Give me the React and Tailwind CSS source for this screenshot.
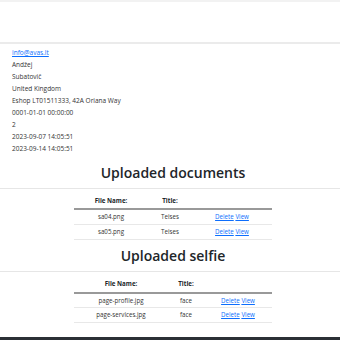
export default function App() {
  const font = { fontFamily: '"Open Sans", "Noto Sans", sans-serif' };
  const info = [
    "Andžej",
    "Subatovič",
    "United Kingdom",
    "Eshop LT01511333, 42A Oriana Way",
    "0001-01-01 00:00:00",
    "2",
    "2023-09-07 14:05:51",
    "2023-09-14 14:05:51",
  ];
  const Table = ({ rows, cols }) => (
    <div className="flex justify-center pl-[6px]">
      <table className="w-[198px] table-fixed text-[6.2px] text-[#333] text-center border-collapse">
        <colgroup>
          <col style={{ width: cols[0] }} />
          <col style={{ width: cols[1] }} />
          <col style={{ width: cols[2] }} />
        </colgroup>
        <thead>
          <tr className="border-b-2 border-[#999]">
            <th className="h-[16px] p-0 font-bold text-[#212529]">File Name:</th>
            <th className="h-[16px] p-0 font-bold text-[#212529]">Title:</th>
            <th className="h-[16px] p-0"></th>
          </tr>
        </thead>
        <tbody>
          {rows.map((r) => (
            <tr key={r[0]} className="border-b border-[#e8e8e8]">
              <td className="h-[15px] p-0">{r[0]}</td>
              <td className="h-[15px] p-0">{r[1]}</td>
              <td className="h-[15px] p-0">
                <a className="text-[#0d6efd] underline" href="#">Delete</a>{" "}
                <a className="text-[#0d6efd] underline" href="#">View</a>
              </td>
            </tr>
          ))}
        </tbody>
      </table>
    </div>
  );
  return (
    <div className="w-[340px] h-[340px] overflow-hidden bg-white flex flex-col" style={font}>
      <div className="h-[2px] bg-[#f2f2f2]" />
      <div className="h-[40px] bg-white" />
      <div className="h-[2px] bg-[#ebebeb]" />
      <div className="pl-[12px] pt-[3px] text-[6.5px] text-[#333] flex flex-col">
        <div className="h-[12px] leading-[12px]">
          <a className="text-[#0d6efd] underline" href="#">info@avas.lt</a>
        </div>
        {info.map((t, i) => (
          <div key={i} className="h-[12px] leading-[12px]">{t}</div>
        ))}
      </div>
      <div className="h-[33px] flex items-center justify-center pl-[6px] pt-[2px] text-[14px] font-semibold text-[#212529]">
        Uploaded documents
      </div>
      <div className="h-px bg-[#e6e6e6]" />
      <div className="h-[4px]" />
      <Table rows={[["sa04.png", "Teises"], ["sa05.png", "Teises"]]} cols={[74, 44, 80]} />
      <div className="h-[31px] flex items-center justify-center pl-[6px] pt-[1px] text-[14px] font-semibold text-[#212529]">
        Uploaded selfie
      </div>
      <div className="h-px bg-[#e6e6e6]" />
      <div className="h-[5px]" />
      <Table rows={[["page-profile.jpg", "face"], ["page-services.jpg", "face"]]} cols={[94, 36, 68]} />
      <div className="flex-1" />
      <div className="h-[3px] bg-[#2b3035]" />
    </div>
  );
}
